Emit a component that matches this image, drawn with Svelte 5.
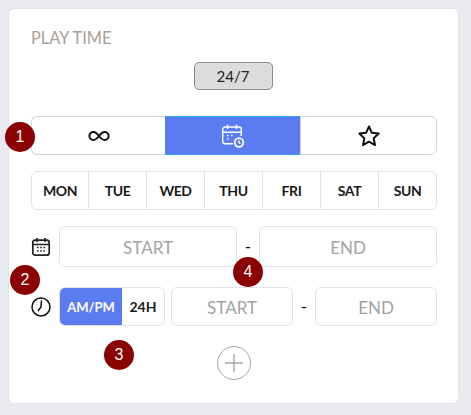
<script>
    const days = ['MON', 'TUE', 'WED', 'THU', 'FRI', 'SAT', 'SUN'];
    const badges = [
        { n: 1, x: 5, y: 122 },
        { n: 2, x: 10, y: 265 },
        { n: 3, x: 104, y: 340 },
        { n: 4, x: 233, y: 257 }
    ];
</script>

<div class="page">
    <section class="card">
        <h3 class="title">PLAY TIME</h3>

        <div class="pill-row">
            <span class="pill">24/7</span>
        </div>

        <div class="tabs">
            <button class="tab">
                <svg width="24" height="24" viewBox="0 0 24 24" fill="none" stroke="#111" stroke-width="2">
                    <path d="M12 12c-2-2.6-3.6-4-5.6-4a4 4 0 0 0 0 8c2 0 3.6-1.400 5.600-4s3.600-4 5.600-4a4 4 0 0 1 0 8c-2 0-3.600-1.400-5.600-4z" />
                </svg>
            </button>
            <button class="tab active">
                <svg width="24" height="26" viewBox="0 0 24 26" fill="none" stroke="#fff" stroke-width="1.400">
                    <path d="M12 20.700H4a2.300 2.300 0 0 1-2.300-2.300V6.300A2.300 2.300 0 0 1 4 4h14a2.300 2.300 0 0 1 2.300 2.300V13" />
                    <path d="M1.700 9.300h18.600M6.500 1.500v4.500M15.500 1.500v4.500" />
                    <path d="M6 12.500h1.500M10 12.500h1.500M6 16h1.500" stroke-width="1.600" />
                    <circle cx="18" cy="19.500" r="4.300" stroke-width="1.800" />
                    <path d="M18 17.300v2.400l1.500 1" />
                </svg>
            </button>
            <button class="tab">
                <svg width="24" height="24" viewBox="0 0 24 24" fill="none" stroke="#111" stroke-width="2" stroke-linejoin="round">
                    <path d="M12 2.500l2.900 6.300 6.800.8-5 4.700 1.300 6.800-6-3.400-6 3.400 1.300-6.800-5-4.700 6.800-.8z" />
                </svg>
            </button>
        </div>

        <div class="days">
            {#each days as day}
                <div class="day">{day}</div>
            {/each}
        </div>

        <div class="row date-row">
            <svg class="row-icon" width="20" height="20" viewBox="0 0 20 20" fill="none" stroke="#222" stroke-width="1.700">
                <rect x="1.800" y="3.200" width="16.400" height="15" rx="2.500" />
                <path d="M1.800 7.500h16.400M6 1v4M14 1v4" />
                <path d="M6 10.500h1.600M9.200 10.500h1.600M12.400 10.500h1.600M6 14h1.600M9.200 14h1.600M12.400 14h1.600" stroke-width="1.700" />
            </svg>
            <div class="field">START</div>
            <span class="dash">-</span>
            <div class="field">END</div>
        </div>

        <div class="row time-row">
            <svg class="row-icon" width="20" height="20" viewBox="0 0 20 20" fill="none" stroke="#111" stroke-width="1.500">
                <circle cx="10" cy="10" r="9" />
                <path d="M10.500 3.500L10 10l-3 4" />
            </svg>
            <div class="toggle">
                <span class="opt on">AM/PM</span>
                <span class="opt">24H</span>
            </div>
            <div class="field">START</div>
            <span class="dash">-</span>
            <div class="field">END</div>
        </div>

        <div class="add-row">
            <button class="add" aria-label="Add">
                <svg width="20" height="20" viewBox="0 0 20 20" fill="none" stroke="#a8a8a8" stroke-width="1.400">
                    <path d="M10 1v18M1 10h18" />
                </svg>
            </button>
        </div>
    </section>

    {#each badges as b}
        <span class="badge" style="left: {b.x}px; top: {b.y}px">{b.n}</span>
    {/each}
</div>

<style>
    :global(body) {
        background: #e9eaef;
    }

    .page {
        position: relative;
        padding: 8px 12px 10px 8px;
        font-family: 'Lato', 'Noto Sans', sans-serif;
        color: #111;
    }

    .card {
        height: 396px;
        box-sizing: border-box;
        padding: 20px 21px 0 22px;
        background: #fff;
        border: 1px solid #e2e3e8;
        border-radius: 6px;
    }

    .title {
        margin: 0;
        font-size: 16.400px;
        line-height: 18px;
        font-weight: 400;
        color: #a99f98;
    }

    .pill-row {
        display: flex;
        justify-content: center;
        margin: 15px 0 26px;
    }

    .pill {
        box-sizing: border-box;
        width: 79px;
        height: 28px;
        margin-right: 2px;
        display: flex;
        align-items: center;
        justify-content: center;
        font-size: 15px;
        color: #222;
        background: #dcdcdc;
        border: 1px solid #8a8a8a;
        border-radius: 5px;
    }

    .tabs {
        display: grid;
        grid-template-columns: 134px 135px 1fr;
        height: 39px;
    }

    .tab {
        display: flex;
        align-items: center;
        justify-content: center;
        padding: 0;
        background: #fff;
        border: 1px solid #d4d4d8;
    }

    .tab:first-child {
        border-right: none;
        border-radius: 6px 0 0 6px;
    }

    .tab:last-child {
        border-radius: 0 6px 6px 0;
    }

    .tab.active {
        background: #5b7cf0;
        border: none;
        border-top: 1px solid #35a0f5;
        border-bottom: 1px solid #35a0f5;
    }

    .days {
        display: grid;
        grid-template-columns: 57px repeat(5, 58px) 1fr;
        height: 39px;
        box-sizing: border-box;
        margin-top: 16px;
        border: 1px solid #dfe0e8;
        border-radius: 6px;
    }

    .day {
        display: flex;
        align-items: center;
        justify-content: center;
        font-size: 14px;
        letter-spacing: -0.4px;
        font-weight: 700;
        color: #1a1a1a;
        border-right: 1px solid #dfe0e8;
    }

    .day:last-child {
        border-right: none;
    }

    .row {
        display: flex;
        align-items: center;
    }

    .row-icon {
        flex: none;
        margin-right: 8px;
    }

    .date-row {
        height: 41px;
        margin-top: 16px;
    }

    .time-row {
        height: 39px;
        margin-top: 20px;
    }

    .field {
        flex: 1;
        height: 100%;
        box-sizing: border-box;
        padding-top: 1px;
        display: flex;
        align-items: center;
        justify-content: center;
        font-size: 17px;
        color: #a3a3a3;
        border: 1px solid #dfe0e8;
        border-radius: 6px;
    }

    .dash {
        flex: none;
        width: 22px;
        text-align: center;
        font-size: 17px;
    }

    .toggle {
        flex: none;
        display: flex;
        width: 106px;
        height: 100%;
        box-sizing: border-box;
        margin-right: 6px;
        border: 1px solid #dfe0e8;
        border-radius: 6px;
        overflow: hidden;
    }

    .opt {
        flex: 1;
        display: flex;
        align-items: center;
        justify-content: center;
        font-size: 14px;
        font-weight: 700;
        color: #1a1a1a;
    }

    .opt.on {
        flex: none;
        width: 62px;
        font-size: 13px;
        color: #fff;
        background: #5b7cf0;
    }

    .add-row {
        display: flex;
        justify-content: center;
        margin-top: 20px;
    }

    .add {
        width: 34px;
        height: 34px;
        display: flex;
        align-items: center;
        justify-content: center;
        padding: 0;
        background: #fff;
        border: 1px solid #a8a8a8;
        border-radius: 50%;
    }

    .badge {
        position: absolute;
        width: 30px;
        height: 30px;
        display: flex;
        align-items: center;
        justify-content: center;
        font-family: 'Liberation Sans', sans-serif;
        font-size: 16px;
        color: #fff;
        background: #8b0000;
        border-radius: 50%;
    }
</style>
